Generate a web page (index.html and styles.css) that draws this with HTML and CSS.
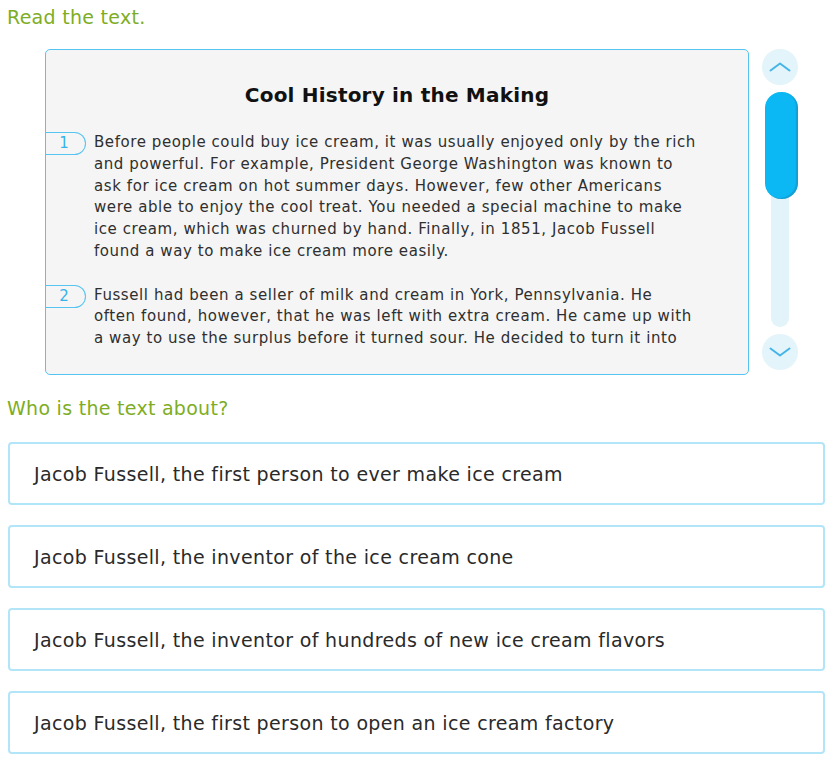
FILE: index.html
```html
<!DOCTYPE html>
<html lang="en">
<head>
<meta charset="utf-8">
<title>Cool History in the Making</title>
<link rel="stylesheet" href="styles.css">
</head>
<body>
<h2 class="prompt">Read the text.</h2>
<div class="reader">
  <div class="passage">
    <div class="passage-scroll">
      <h1 class="passage-title">Cool History in the Making</h1>
      <div class="para">
        <span class="para-num">1</span>
        <p class="para-text">Before people could buy ice cream, it was usually enjoyed only by the rich and powerful. For example, President George Washington was known to ask for ice cream on hot summer days. However, few other Americans were able to enjoy the cool treat. You needed a special machine to make ice cream, which was churned by hand. Finally, in 1851, Jacob Fussell found a way to make ice cream more easily.</p>
      </div>
      <div class="para">
        <span class="para-num">2</span>
        <p class="para-text">Fussell had been a seller of milk and cream in York, Pennsylvania. He often found, however, that he was left with extra cream. He came up with a way to use the surplus before it turned sour. He decided to turn it into</p>
      </div>
    </div>
  </div>
  <div class="scroller">
    <button class="scroll-btn" aria-label="Scroll up">
      <svg width="22" height="10" viewBox="0 0 22 10"><path d="M1.5 8.5 L11 1.5 L20.5 8.5" fill="none" stroke="#45b5e8" stroke-width="2" stroke-linecap="round" stroke-linejoin="round"/></svg>
    </button>
    <div class="track">
      <div class="thumb"></div>
    </div>
    <button class="scroll-btn" aria-label="Scroll down">
      <svg width="22" height="10" viewBox="0 0 22 10"><path d="M1.5 1.5 L11 8.5 L20.5 1.5" fill="none" stroke="#45b5e8" stroke-width="2" stroke-linecap="round" stroke-linejoin="round"/></svg>
    </button>
  </div>
</div>
<h2 class="prompt prompt-question">Who is the text about?</h2>
<div class="answers">
  <div class="answer">Jacob Fussell, the first person to ever make ice cream</div>
  <div class="answer">Jacob Fussell, the inventor of the ice cream cone</div>
  <div class="answer">Jacob Fussell, the inventor of hundreds of new ice cream flavors</div>
  <div class="answer">Jacob Fussell, the first person to open an ice cream factory</div>
</div>
</body>
</html>
```

FILE: styles.css
```css
* { box-sizing: border-box; }

html, body {
  margin: 0;
  padding: 0;
  background: #ffffff;
  font-family: "DejaVu Sans", Verdana, sans-serif;
}

.prompt {
  margin: 0;
  padding: 6px 0 0 7px;
  font-size: 19px;
  font-weight: normal;
  line-height: 22px;
  letter-spacing: 0.28px;
  color: #7dad24;
}

.prompt-question {
  padding-top: 22px;
}

.reader {
  display: flex;
  align-items: flex-start;
  gap: 13px;
  margin: 21px 0 0 45px;
}

.passage {
  width: 704px;
  height: 326px;
  background: #f5f5f5;
  border: 1px solid #55c4f1;
  border-radius: 5px;
  padding: 0 0 26px 0;
}

.passage-scroll {
  height: 298px;
  overflow: hidden;
  padding: 33px 50.5px 0 0;
}

.passage-title {
  margin: 0 0 25px 0;
  padding-left: 50.5px;
  font-size: 20px;
  line-height: 24px;
  font-weight: bold;
  letter-spacing: 0.2px;
  text-align: center;
  color: #111111;
}

.para {
  display: flex;
  align-items: flex-start;
  gap: 8px;
  margin-bottom: 22px;
}

.para-num {
  flex: none;
  width: 40px;
  height: 23px;
  border: 1px solid #55c4f1;
  border-left: none;
  border-radius: 0 12px 12px 0;
  font-size: 15px;
  line-height: 21px;
  text-align: center;
  color: #35b3ea;
  padding-right: 3px;
}

.para-text {
  margin: 0;
  font-size: 15px;
  line-height: 21.75px;
  letter-spacing: 0.58px;
  color: #2f2f2f;
}

.scroller {
  width: 36px;
  display: flex;
  flex-direction: column;
  align-items: center;
  gap: 7px;
}

.scroll-btn {
  width: 36px;
  height: 36px;
  border: none;
  border-radius: 50%;
  background: #e3f4fb;
  padding: 0;
  display: flex;
  align-items: center;
  justify-content: center;
}

.track {
  position: relative;
  width: 18px;
  height: 235px;
  border-radius: 9px;
  background: #e2f3fa;
}

.thumb {
  position: absolute;
  top: 0;
  left: -6px;
  width: 33px;
  height: 107px;
  border-radius: 16px;
  background: #0bb8f3;
  box-shadow: inset -2px -1px 1px rgba(40, 110, 150, 0.35);
}

.answers {
  display: flex;
  flex-direction: column;
  gap: 20px;
  margin: 23px 13px 0 8px;
}

.answer {
  height: 63px;
  display: flex;
  align-items: center;
  padding-left: 24px;
  border: 2px solid #b3e5f8;
  border-radius: 4px;
  font-size: 19px;
  letter-spacing: 0.35px;
  color: #2a2a2a;
}
```
